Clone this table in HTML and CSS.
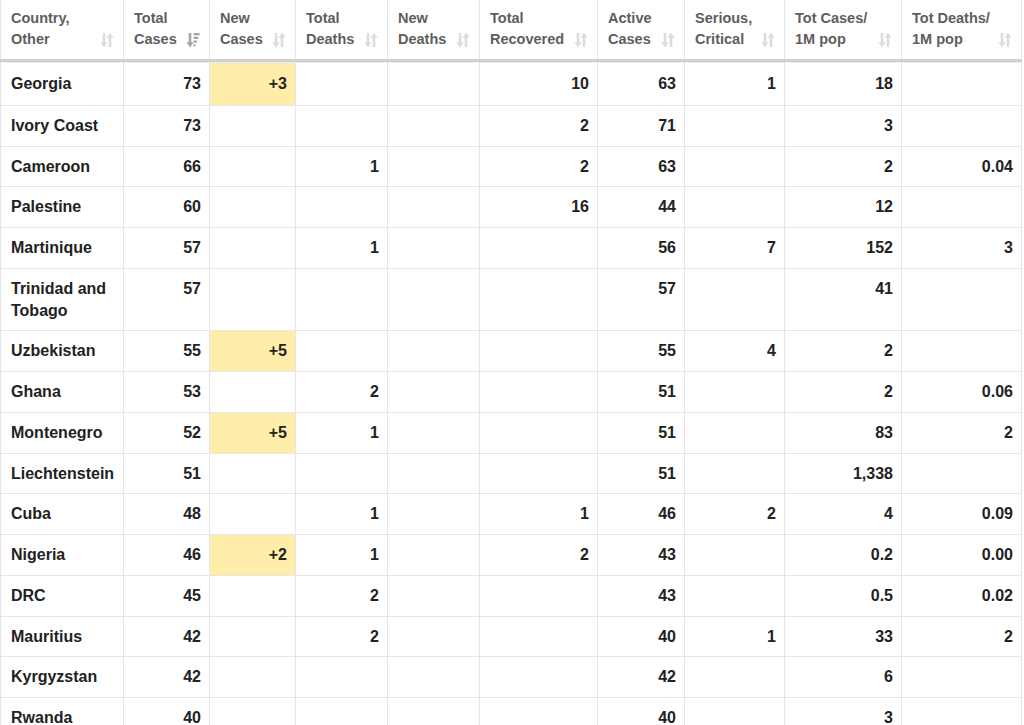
FILE: index.html
```html
<!DOCTYPE html>
<html>
<head>
<meta charset="utf-8">
<link rel="stylesheet" href="styles.css">
</head>
<body>
<svg width="0" height="0" class="defs">
  <defs>
    <symbol id="sort" viewBox="0 0 14 16">
      <path d="M4 1v12" stroke="currentColor" stroke-width="2.6" fill="none"/>
      <path d="M0.4 10.2L4 15.4l3.6-5.2z" fill="currentColor"/>
      <path d="M10 15V3" stroke="currentColor" stroke-width="2.6" fill="none"/>
      <path d="M6.4 5.8L10 0.6l3.6 5.2z" fill="currentColor"/>
    </symbol>
    <symbol id="sortdesc" viewBox="0 0 14 16">
      <path d="M4 1v12" stroke="currentColor" stroke-width="2.6" fill="none"/>
      <path d="M0.4 10.2L4 15.4l3.6-5.2z" fill="currentColor"/>
      <rect x="7.6" y="1" width="6" height="2.3" fill="currentColor"/>
      <rect x="7.6" y="4.7" width="4.6" height="2.3" fill="currentColor"/>
      <rect x="7.6" y="8.4" width="3.2" height="2.3" fill="currentColor"/>
      <rect x="7.6" y="12.1" width="1.8" height="2.3" fill="currentColor"/>
    </symbol>
  </defs>
</svg>
<table class="cases">
  <colgroup>
    <col class="c1"><col class="c2"><col class="c3"><col class="c4"><col class="c5">
    <col class="c6"><col class="c7"><col class="c8"><col class="c9"><col class="c10">
  </colgroup>
  <thead>
    <tr>
      <th><div class="hd"><span>Country,<br>Other</span><svg class="ic"><use href="#sort"/></svg></div></th>
      <th><div class="hd"><span>Total<br>Cases</span><svg class="ic active"><use href="#sortdesc"/></svg></div></th>
      <th><div class="hd"><span>New<br>Cases</span><svg class="ic"><use href="#sort"/></svg></div></th>
      <th><div class="hd"><span>Total<br>Deaths</span><svg class="ic"><use href="#sort"/></svg></div></th>
      <th><div class="hd"><span>New<br>Deaths</span><svg class="ic"><use href="#sort"/></svg></div></th>
      <th><div class="hd"><span>Total<br>Recovered</span><svg class="ic"><use href="#sort"/></svg></div></th>
      <th><div class="hd"><span>Active<br>Cases</span><svg class="ic"><use href="#sort"/></svg></div></th>
      <th><div class="hd"><span>Serious,<br>Critical</span><svg class="ic"><use href="#sort"/></svg></div></th>
      <th><div class="hd"><span>Tot&nbsp;Cases/<br>1M pop</span><svg class="ic"><use href="#sort"/></svg></div></th>
      <th><div class="hd"><span>Tot&nbsp;Deaths/<br>1M pop</span><svg class="ic"><use href="#sort"/></svg></div></th>
    </tr>
  </thead>
  <tbody>
    <tr><td>Georgia</td><td>73</td><td class="new">+3</td><td></td><td></td><td>10</td><td>63</td><td>1</td><td>18</td><td></td></tr>
    <tr><td>Ivory Coast</td><td>73</td><td></td><td></td><td></td><td>2</td><td>71</td><td></td><td>3</td><td></td></tr>
    <tr><td>Cameroon</td><td>66</td><td></td><td>1</td><td></td><td>2</td><td>63</td><td></td><td>2</td><td>0.04</td></tr>
    <tr><td>Palestine</td><td>60</td><td></td><td></td><td></td><td>16</td><td>44</td><td></td><td>12</td><td></td></tr>
    <tr><td>Martinique</td><td>57</td><td></td><td>1</td><td></td><td></td><td>56</td><td>7</td><td>152</td><td>3</td></tr>
    <tr><td>Trinidad and Tobago</td><td>57</td><td></td><td></td><td></td><td></td><td>57</td><td></td><td>41</td><td></td></tr>
    <tr><td>Uzbekistan</td><td>55</td><td class="new">+5</td><td></td><td></td><td></td><td>55</td><td>4</td><td>2</td><td></td></tr>
    <tr><td>Ghana</td><td>53</td><td></td><td>2</td><td></td><td></td><td>51</td><td></td><td>2</td><td>0.06</td></tr>
    <tr><td>Montenegro</td><td>52</td><td class="new">+5</td><td>1</td><td></td><td></td><td>51</td><td></td><td>83</td><td>2</td></tr>
    <tr><td>Liechtenstein</td><td>51</td><td></td><td></td><td></td><td></td><td>51</td><td></td><td>1,338</td><td></td></tr>
    <tr><td>Cuba</td><td>48</td><td></td><td>1</td><td></td><td>1</td><td>46</td><td>2</td><td>4</td><td>0.09</td></tr>
    <tr><td>Nigeria</td><td>46</td><td class="new">+2</td><td>1</td><td></td><td>2</td><td>43</td><td></td><td>0.2</td><td>0.00</td></tr>
    <tr><td>DRC</td><td>45</td><td></td><td>2</td><td></td><td></td><td>43</td><td></td><td>0.5</td><td>0.02</td></tr>
    <tr><td>Mauritius</td><td>42</td><td></td><td>2</td><td></td><td></td><td>40</td><td>1</td><td>33</td><td>2</td></tr>
    <tr><td>Kyrgyzstan</td><td>42</td><td></td><td></td><td></td><td></td><td>42</td><td></td><td>6</td><td></td></tr>
    <tr><td>Rwanda</td><td>40</td><td></td><td></td><td></td><td></td><td>40</td><td></td><td>3</td><td></td></tr>
  </tbody>
</table>
</body>
</html>
```
FILE: styles.css
```css
html, body {
  margin: 0;
  padding: 0;
  background: #fff;
}
body {
  font-family: "Liberation Sans", Arial, sans-serif;
  font-size: 16px;
  color: #222;
  overflow: hidden;
}
.defs {
  position: absolute;
  width: 0;
  height: 0;
}
.cases {
  border-collapse: collapse;
  table-layout: fixed;
  width: 1021px;
}
.c1 { width: 123px; }
.c2 { width: 86px; }
.c3 { width: 86px; }
.c4 { width: 92px; }
.c5 { width: 92px; }
.c6 { width: 118px; }
.c7 { width: 87px; }
.c8 { width: 100px; }
.c9 { width: 117px; }
.c10 { width: 120px; }

.cases th,
.cases td {
  border: 1px solid #e6e6e6;
  font-weight: bold;
}
.cases th {
  border-top: none;
  border-bottom: 3px solid #d0d0d0;
  color: #5e5e5e;
  font-size: 14.5px;
  line-height: 21px;
  text-align: left;
  padding: 8px 9px 9px 10px;
  vertical-align: bottom;
}
.hd {
  display: flex;
  justify-content: space-between;
  align-items: flex-end;
}
.hd span {
  white-space: nowrap;
}
.ic {
  width: 14px;
  height: 16px;
  color: #dcdcdc;
  flex: none;
  margin-bottom: 2px;
}
.ic.active {
  color: #a6a6a6;
}
.cases td {
  line-height: 21.75px;
  padding: 9px 8px 9px 10px;
  text-align: right;
  vertical-align: top;
}
.cases td:first-child {
  text-align: left;
}
.cases tbody tr:first-child td {
  padding-top: 11px;
  padding-bottom: 10px;
  box-shadow: inset 0 1px 0 #ececec;
}
.cases td.new {
  background: #ffeeaa;
}
```
